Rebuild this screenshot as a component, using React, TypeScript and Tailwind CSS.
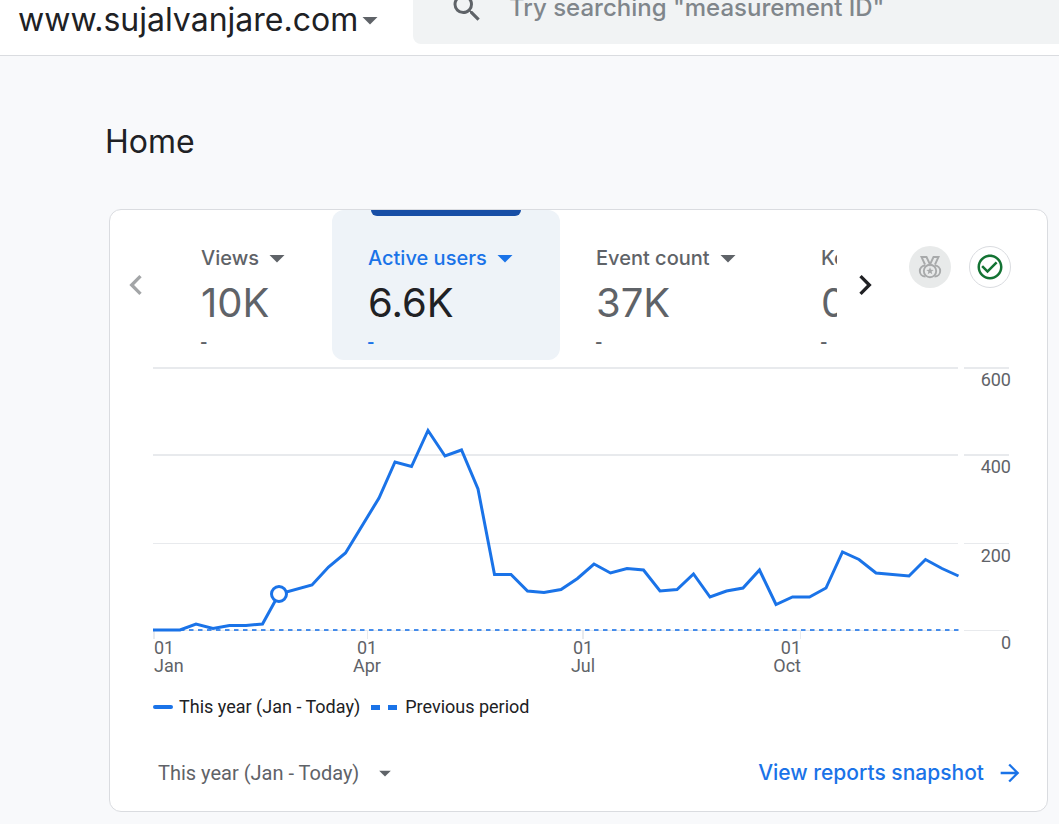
import {
  MdArrowDropDown,
  MdArrowForward,
  MdCheckCircleOutline,
  MdChevronLeft,
  MdChevronRight,
  MdSearch,
} from "react-icons/md";

type Metric = {
  label: string;
  value: string;
  width: string;
  active?: boolean;
};

const metrics: Metric[] = [
  { label: "Views", value: "10K", width: "w-[167px]" },
  { label: "Active users", value: "6.6K", width: "w-[228px]", active: true },
  { label: "Event count", value: "37K", width: "w-[225px]" },
  { label: "Key events", value: "0", width: "w-[225px]" },
];

const points = [
  [0, 270], [27, 270], [43, 264], [60, 268.5], [76.5, 265.5], [93, 265.5],
  [109.5, 264], [126, 234], [159, 225], [175.5, 207], [192.5, 193], [226, 138],
  [242, 102], [258.5, 106.5], [275, 70.5], [292, 96], [308.5, 90], [325, 129],
  [341.5, 214.5], [358, 214.5], [374.5, 231], [391, 232.5], [408, 229.5],
  [424.5, 218.5], [441, 204], [457.5, 213], [474, 208.5], [490.5, 210],
  [507, 231], [524, 229.5], [540.5, 214], [557, 237], [573.5, 231], [590, 228],
  [606.5, 210], [623, 244.5], [639.5, 237], [656.5, 237], [673, 228],
  [689.5, 192], [706, 199.5], [723, 213], [756, 216], [772.5, 199.5],
  [789, 208.5], [805.5, 216],
];

const gridLines = [
  { label: "600", y: 8, stroke: 2, textY: 26 },
  { label: "400", y: 95, stroke: 2, textY: 113 },
  { label: "200", y: 183.5, stroke: 1, textY: 202 },
  { label: "0", y: 270.5, stroke: 1, textY: 289 },
];

const months = [
  { label: "Jan", tick: 1, stroke: 2, x: 1, anchor: "start" as const },
  { label: "Apr", tick: 214.5, stroke: 1, x: 214, anchor: "middle" as const },
  { label: "Jul", tick: 430, stroke: 2, x: 430, anchor: "middle" as const },
  { label: "Oct", tick: 647.5, stroke: 1, x: 648, anchor: "end" as const },
];

function MedalIcon() {
  return (
    <svg
      viewBox="0 0 24 24"
      className="size-6 shrink-0"
      fill="none"
      stroke="currentColor"
      strokeWidth="1.9"
    >
      <path d="M7 9.500 3.500 2H8.500L12 9.500 15.500 2H20.500L17 9.500" />
      <circle cx="12" cy="16" r="6.200" />
      <path d="M7.500 10.500C4 10.500 1.800 13 1.800 16s2.200 5.500 5.700 5.500M16.500 10.500c3.500 0 5.700 2.500 5.700 5.500s-2.200 5.500-5.700 5.500" />
      <path
        d="M12 12.200l1 2.500 2.700.2-2.100 1.700.7 2.600-2.300-1.400-2.300 1.400.7-2.600-2.100-1.700 2.700-.2z"
        fill="currentColor"
        stroke="none"
      />
    </svg>
  );
}

function MetricTab({ label, value, width, active }: Metric) {
  return (
    <button
      className={`flex h-[150px] shrink-0 flex-col rounded-xl text-left ${width} ${
        active ? "bg-[#eef3f8]" : ""
      }`}
    >
      <span
        className={`h-[6px] w-[150px] self-center rounded-b-md ${
          active ? "bg-[#174ea6]" : ""
        }`}
      />
      <span
        className={`mt-6 flex h-9 items-center pl-9 text-[20px] font-medium whitespace-nowrap ${
          active ? "text-[#1a73e8]" : "text-[#5f6368]"
        }`}
      >
        {label}
        <MdArrowDropDown className="size-9 shrink-0" />
      </span>
      <span
        className={`h-[52px] pl-9 text-[40px] leading-[54px] ${
          active ? "text-[#202124]" : "text-[#5f6368]"
        }`}
      >
        {value}
      </span>
      <span
        className={`pl-[35px] text-[16px] leading-7 font-bold ${
          active ? "text-[#1a73e8]" : "text-[#5f6368]"
        }`}
      >
        -
      </span>
    </button>
  );
}

function UsersChart() {
  return (
    <svg
      viewBox="0 0 858 319"
      className="block h-auto w-full overflow-visible font-[Roboto,sans-serif] text-[18px]"
      role="img"
      aria-label="Active users"
    >
      {gridLines.map((line) => (
        <g key={line.label}>
          <path
            d={`M0 ${line.y}H805M811 ${line.y}H856`}
            stroke="#e8eaed"
            strokeWidth={line.stroke}
          />
          <text x="858" y={line.textY} textAnchor="end" fill="#5f6368">
            {line.label}
          </text>
        </g>
      ))}
      {months.map((month) => (
        <g key={month.label} fill="#5f6368">
          <path
            d={`M${month.tick} 271v8`}
            stroke="#e8eaed"
            strokeWidth={month.stroke}
          />
          <text x={month.x} y="294" textAnchor={month.anchor}>
            01
          </text>
          <text x={month.x} y="312" textAnchor={month.anchor}>
            {month.label}
          </text>
        </g>
      ))}
      <path
        d="M0 270H806"
        stroke="#1a73e8"
        strokeOpacity="0.8"
        strokeWidth="2"
        strokeDasharray="4.500 4.500"
      />
      <polyline
        points={points.map((p) => p.join(",")).join(" ")}
        fill="none"
        stroke="#1a73e8"
        strokeWidth="3"
      />
      <circle
        cx="126"
        cy="234"
        r="7.500"
        fill="#fff"
        stroke="#1a73e8"
        strokeWidth="3"
      />
    </svg>
  );
}

export default function App() {
  return (
    <div className="min-h-screen bg-[#f8f9fb] font-[Inter,sans-serif] text-[#202124]">
      <header className="flex h-14 items-start overflow-hidden border-b border-[#dadce0] bg-white">
        <button className="flex h-10 w-[413px] shrink-0 items-center pl-[18px] text-[32px] whitespace-nowrap">
          www.sujalvanjare.com
          <MdArrowDropDown className="-ml-1.5 size-9 shrink-0 text-[#5f6368]" />
        </button>
        <label className="-mt-7 flex h-[72px] flex-1 items-center rounded-bl-lg bg-[#f1f3f4] pl-9">
          <MdSearch className="size-9 shrink-0 text-[#5f6368]" />
          <input
            type="text"
            aria-label="Search"
            placeholder={'Try searching "measurement ID"'}
            className="ml-6 min-w-0 flex-1 bg-transparent text-[24px] font-medium outline-none placeholder:text-[#80868b]"
          />
        </label>
      </header>

      <main className="pr-[11px] pb-3 pl-[109px]">
        <h1 className="-ml-1 pt-[66px] text-[32px] leading-10">Home</h1>

        <section className="mt-[47px] rounded-xl border border-[#dadce0] bg-white pb-[18px]">
          <div className="flex pr-9">
            <button
              aria-label="Previous metrics"
              className="flex w-[55px] shrink-0 items-center pl-1.5 text-[#a3a5a7]"
            >
              <MdChevronLeft className="size-10" />
            </button>
            <div className="flex min-w-0 flex-1 overflow-hidden">
              {metrics.map((metric) => (
                <MetricTab key={metric.label} {...metric} />
              ))}
            </div>
            <button
              aria-label="Next metrics"
              className="flex w-14 shrink-0 items-center justify-center"
            >
              <MdChevronRight className="size-10" />
            </button>
            <div className="ml-4 flex gap-[18px] pt-9">
              <button
                aria-label="Benchmarking"
                className="flex size-[42px] items-center justify-center rounded-full bg-[#e8eaea] text-[#a8aaab]"
              >
                <MedalIcon />
              </button>
              <button
                aria-label="Data quality"
                className="flex size-[42px] items-center justify-center rounded-full border border-[#dadce0] text-[#137333]"
              >
                <MdCheckCircleOutline className="size-[30px] shrink-0" />
              </button>
            </div>
          </div>

          <div className="pr-9 pl-[43px]">
            <UsersChart />
            <div className="mt-4 flex items-center font-[Roboto,sans-serif] text-[18px] leading-6">
              <span className="mr-1.5 h-1 w-5 rounded-full bg-[#1a73e8]" />
              This year (Jan - Today)
              <span className="mr-2 ml-[11px] flex gap-2">
                <span className="h-[5px] w-[9px] bg-[#1a73e8]" />
                <span className="h-[5px] w-[9px] bg-[#1a73e8]" />
              </span>
              Previous period
            </div>
          </div>

          <div className="mt-[34px] flex h-10 items-center justify-between pr-[23px] pl-12">
            <button className="flex items-center gap-3 font-[Roboto,sans-serif] text-[20px] text-[#5f6368]">
              This year (Jan - Today)
              <MdArrowDropDown className="size-7" />
            </button>
            <a
              href="#reports"
              className="flex items-center gap-3 text-[21px] font-medium text-[#1a73e8]"
            >
              View reports snapshot
              <MdArrowForward className="size-7" />
            </a>
          </div>
        </section>
      </main>
    </div>
  );
}
